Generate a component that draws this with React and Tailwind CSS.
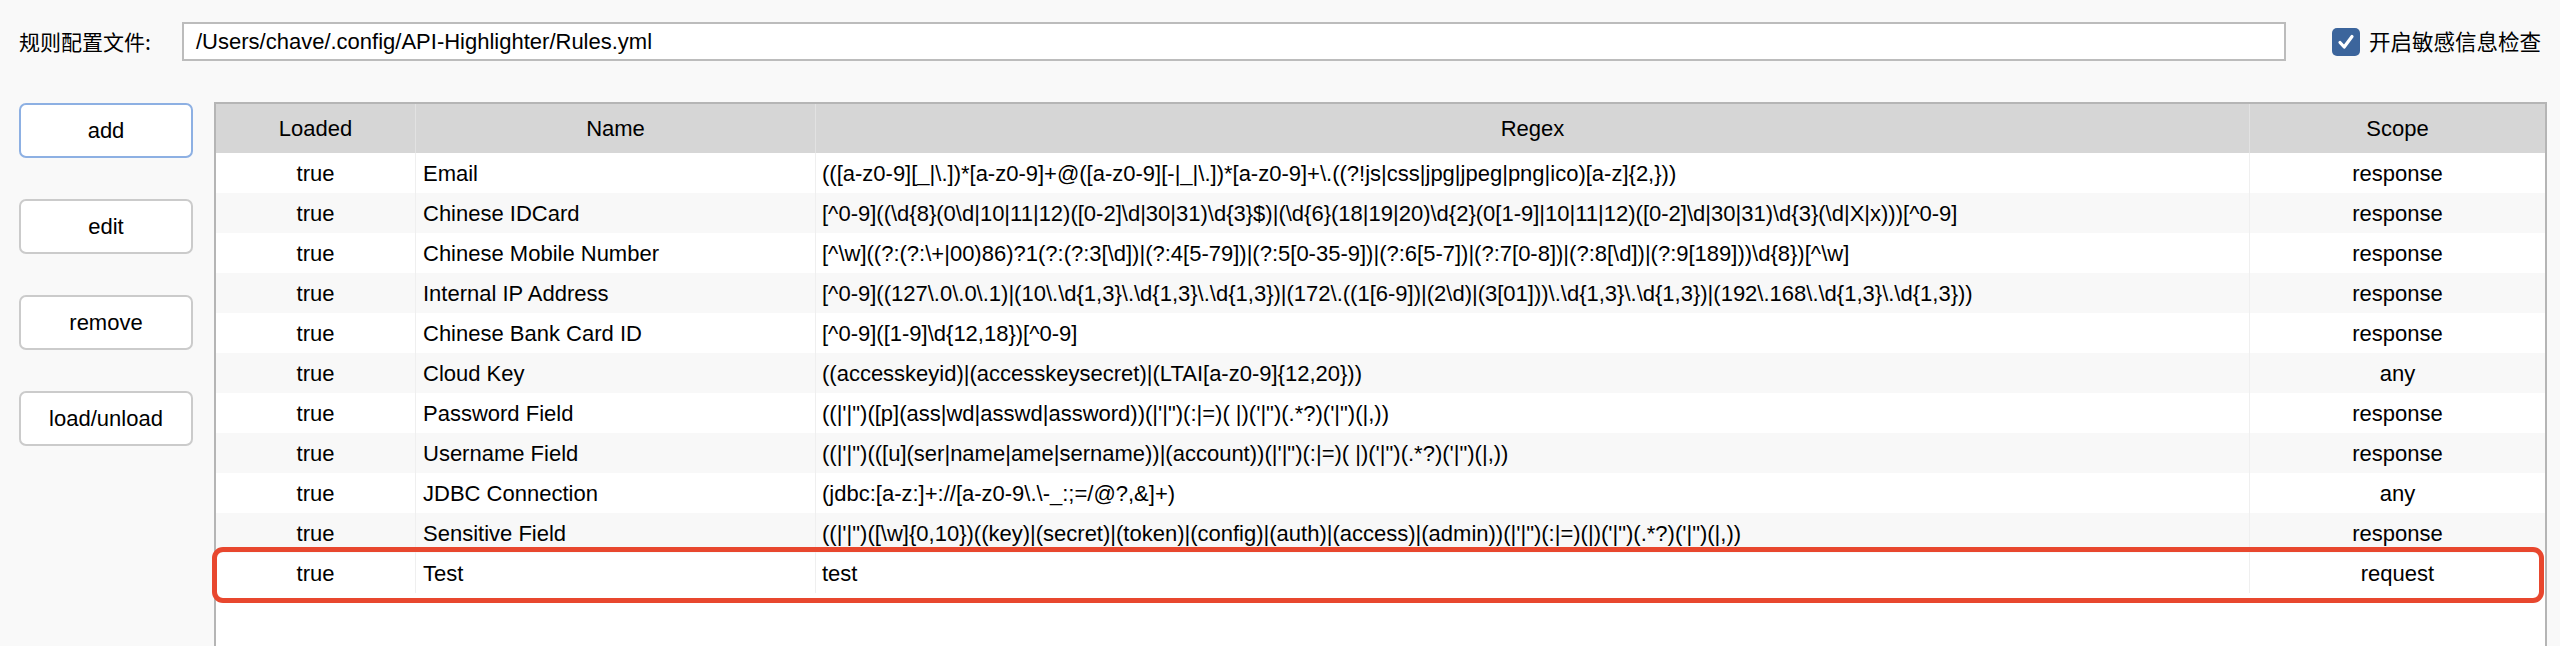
import React from 'react';

const rules = [
  { loaded: 'true', name: 'Email', regex: '(([a-z0-9][_|\\.])*[a-z0-9]+@([a-z0-9][-|_|\\.])*[a-z0-9]+\\.((?!js|css|jpg|jpeg|png|ico)[a-z]{2,}))', scope: 'response' },
  { loaded: 'true', name: 'Chinese IDCard', regex: '[^0-9]((\\d{8}(0\\d|10|11|12)([0-2]\\d|30|31)\\d{3}$)|(\\d{6}(18|19|20)\\d{2}(0[1-9]|10|11|12)([0-2]\\d|30|31)\\d{3}(\\d|X|x)))[^0-9]', scope: 'response' },
  { loaded: 'true', name: 'Chinese Mobile Number', regex: '[^\\w]((?:(?:\\+|00)86)?1(?:(?:3[\\d])|(?:4[5-79])|(?:5[0-35-9])|(?:6[5-7])|(?:7[0-8])|(?:8[\\d])|(?:9[189]))\\d{8})[^\\w]', scope: 'response' },
  { loaded: 'true', name: 'Internal IP Address', regex: '[^0-9]((127\\.0\\.0\\.1)|(10\\.\\d{1,3}\\.\\d{1,3}\\.\\d{1,3})|(172\\.((1[6-9])|(2\\d)|(3[01]))\\.\\d{1,3}\\.\\d{1,3})|(192\\.168\\.\\d{1,3}\\.\\d{1,3}))', scope: 'response' },
  { loaded: 'true', name: 'Chinese Bank Card ID', regex: '[^0-9]([1-9]\\d{12,18})[^0-9]', scope: 'response' },
  { loaded: 'true', name: 'Cloud Key', regex: '((accesskeyid)|(accesskeysecret)|(LTAI[a-z0-9]{12,20}))', scope: 'any' },
  { loaded: 'true', name: 'Password Field', regex: '((|\'|")([p](ass|wd|asswd|assword))(|\'|")(:|=)( |)(\'|")(.*?)(\'|")(|,))', scope: 'response' },
  { loaded: 'true', name: 'Username Field', regex: '((|\'|")(([u](ser|name|ame|sername))|(account))(|\'|")(:|=)( |)(\'|")(.*?)(\'|")(|,))', scope: 'response' },
  { loaded: 'true', name: 'JDBC Connection', regex: '(jdbc:[a-z:]+://[a-z0-9\\.\\-_:;=/@?,&]+)', scope: 'any' },
  { loaded: 'true', name: 'Sensitive Field', regex: '((|\'|")([\\w]{0,10})((key)|(secret)|(token)|(config)|(auth)|(access)|(admin))(|\'|")(:|=)(|)(\'|")(.*?)(\'|")(|,))', scope: 'response' },
  { loaded: 'true', name: 'Test', regex: 'test', scope: 'request', highlight: true },
];

function Button({ label, focused }) {
  return (
    <button
      className={
        focused
          ? 'w-[174px] h-[55px] bg-white rounded-[7px] border-2 border-[#8db0e3] text-[22px] text-black'
          : 'w-[174px] h-[55px] bg-white rounded-[7px] border-2 border-[#cbcbcb] text-[22px] text-black'
      }
    >
      {label}
    </button>
  );
}

function Row({ rule, index }) {
  const bg = index % 2 === 0 ? 'bg-white' : 'bg-[#f8f8f8]';
  return (
    <div className={`relative grid grid-cols-[199px_400px_1434px_1fr] h-[40px] ${bg}`}>
      <div className="flex items-center justify-center">{rule.loaded}</div>
      <div className="flex items-center pl-[7px] border-l border-[#efefef]">{rule.name}</div>
      <div className="flex items-center pl-[6px] border-l border-[#efefef] whitespace-nowrap overflow-hidden">{rule.regex}</div>
      <div className="flex items-center justify-center border-l border-[#efefef]">{rule.scope}</div>
      {rule.highlight && (
        <div className="absolute -left-[4px] right-[1px] -top-[6px] -bottom-[10px] border-[5px] border-[#e8472e] rounded-[11px]"></div>
      )}
    </div>
  );
}

export default function App() {
  return (
    <div className="w-[2560px] h-[646px] bg-[#f9f9f9] flex flex-col overflow-hidden font-['Liberation_Sans','Noto_Sans_CJK_SC',sans-serif] text-[22px] text-black">
      <div className="flex items-center h-[39px] mt-[22px] pl-[19px]">
        <span className="w-[163px] font-['Noto_Sans_CJK_SC',sans-serif] text-[21px]">规则配置文件:</span>
        <div className="w-[2104px] h-[39px] border-2 border-[#bcbcbc] bg-white flex items-center pl-[12px]">
          /Users/chave/.config/API-Highlighter/Rules.yml
        </div>
        <div className="ml-[46px] flex items-center gap-[9px]">
          <div className="w-[28px] h-[28px] rounded-[5px] bg-[#3c659c] flex items-center justify-center">
            <svg width="20" height="20" viewBox="0 0 20 20">
              <path d="M4 10.5 L8.2 15 L16 4.5" fill="none" stroke="white" strokeWidth="3.2" strokeLinecap="round" strokeLinejoin="round" />
            </svg>
          </div>
          <span className="font-['Noto_Sans_CJK_SC',sans-serif] text-[21.5px]">开启敏感信息检查</span>
        </div>
      </div>

      <div className="flex flex-1 min-h-0 mt-[41px]">
        <div className="w-[214px] pl-[19px] flex flex-col gap-[41px] pt-[1px]">
          <Button label="add" focused />
          <Button label="edit" />
          <Button label="remove" />
          <Button label="load/unload" />
        </div>

        <div className="w-[2333px] border-2 border-b-0 border-[#b5b5b5] bg-white flex flex-col">
          <div className="grid grid-cols-[199px_400px_1434px_1fr] h-[49px] bg-[#d6d6d6]">
            <div className="flex items-center justify-center">Loaded</div>
            <div className="flex items-center justify-center border-l border-[#e2e2e2]">Name</div>
            <div className="flex items-center justify-center border-l border-[#e2e2e2]">Regex</div>
            <div className="flex items-center justify-center border-l border-[#e2e2e2]">Scope</div>
          </div>
          {rules.map((rule, i) => (
            <Row key={rule.name} rule={rule} index={i} />
          ))}
        </div>
      </div>
    </div>
  );
}
